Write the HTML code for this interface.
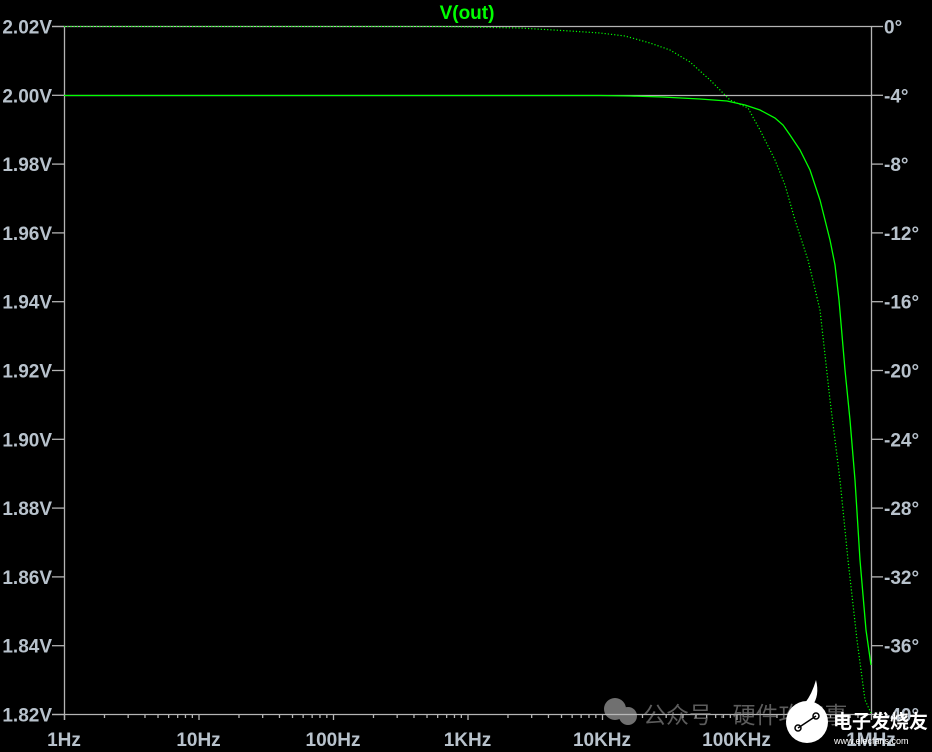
<!DOCTYPE html>
<html><head><meta charset="utf-8"><style>
html,body{margin:0;padding:0;background:#000;width:932px;height:752px;overflow:hidden}
svg{display:block}
text{font-family:"Liberation Sans",Arial,sans-serif;font-weight:bold;font-size:19px;fill:#b8c2cc}
</style></head><body>
<svg id="s" width="932" height="752" viewBox="0 0 932 752">
<rect width="932" height="752" fill="#000"/>
<g stroke="#b4b4b4" stroke-width="1.3" fill="none" id="ax">
<line x1="64.5" y1="26" x2="64.5" y2="720"/>
<line x1="871.5" y1="26" x2="871.5" y2="714"/>
<line x1="52" y1="26.5" x2="871" y2="26.5"/>
<line x1="52" y1="714.5" x2="871" y2="714.5"/>
<line x1="64" y1="95.5" x2="871" y2="95.5"/>
</g>
<g id="lab"></g>
<text x="467" y="19" text-anchor="middle" style="fill:#00ff00;font-size:19px">V(out)</text>
<polyline fill="none" stroke="#00ff00" stroke-width="1.2" stroke-dasharray="1.2 2" points="64,26.5 440,26.5 520,28 570,31 600,33 625,36 650,43 670,50 690,62 710,80 730,100 748,108 760,130 775,160 785,185 795,220 808,260 820,310 830,400 840,480 848,560 857,640 865,700 871,713"/>
<polyline fill="none" stroke="#00ff00" stroke-width="1.3" points="64,95.5 600,95.5 630,96 662,97 700,99 727,101 745,105 760,110 775,118 783,125 790,135 800,150 810,170 820,200 830,240 835,265 839,300 845,370 850,420 855,480 860,560 866,630 871,665"/>
<g opacity="0.6">
<circle cx="615" cy="709" r="11" fill="#bbb"/><circle cx="628" cy="716" r="9" fill="#bbb"/>
<text x="643" y="723" style="font-weight:normal;font-size:23px;fill:#999;font-family:'Liberation Sans','Noto Sans CJK SC',sans-serif">公众号 · 硬件攻点事</text>
</g>
<circle cx="807" cy="722" r="21" fill="#fff"/>
<path d="M805,703 Q812,694 816,680 Q820,696 812,706 Z" fill="#fff"/>
<line x1="798" y1="728" x2="816" y2="716" stroke="#000" stroke-width="1.5"/>
<circle cx="798" cy="728" r="3" fill="none" stroke="#000" stroke-width="1.5"/>
<circle cx="816" cy="716" r="3" fill="none" stroke="#000" stroke-width="1.5"/>
<text x="833" y="728" style="font-size:19px;fill:#fff;font-family:'Liberation Sans','Noto Sans CJK SC',sans-serif">电子发烧友</text>
<text x="834" y="744" style="font-size:9px;fill:#fff;font-weight:normal">www.elecfans.com</text>
</svg>
<script>
var ns="http://www.w3.org/2000/svg",ax=document.getElementById('ax'),lab=document.getElementById('lab');
function L(x1,y1,x2,y2){var l=document.createElementNS(ns,'line');l.setAttribute('x1',x1);l.setAttribute('y1',y1);l.setAttribute('x2',x2);l.setAttribute('y2',y2);ax.appendChild(l);}
function T(x,y,s,a){var t=document.createElementNS(ns,'text');t.setAttribute('x',x);t.setAttribute('y',y);t.setAttribute('text-anchor',a);t.textContent=s;lab.appendChild(t);}
var vl=["2.02V","2.00V","1.98V","1.96V","1.94V","1.92V","1.90V","1.88V","1.86V","1.84V","1.82V"];
var pl=["0°","-4°","-8°","-12°","-16°","-20°","-24°","-28°","-32°","-36°","-40°"];
for(var i=0;i<11;i++){var y=26.5+i*68.8;L(52,y,64,y);L(871,y,883,y);T(52,y+7,vl[i],'end');T(884,y+7,pl[i],'start');}
var xl=["1Hz","10Hz","100Hz","1KHz","10KHz","100KHz","1MHz"];
for(var d=0;d<7;d++){var x0=64+d*134.5;L(x0+0.5,714,x0+0.5,720);T(x0,746,xl[d],'middle');
if(d<6)for(var k=2;k<10;k++){var x=x0+134.5*Math.log10(k);L(x,714,x,718);}}
</script>
</body></html>
